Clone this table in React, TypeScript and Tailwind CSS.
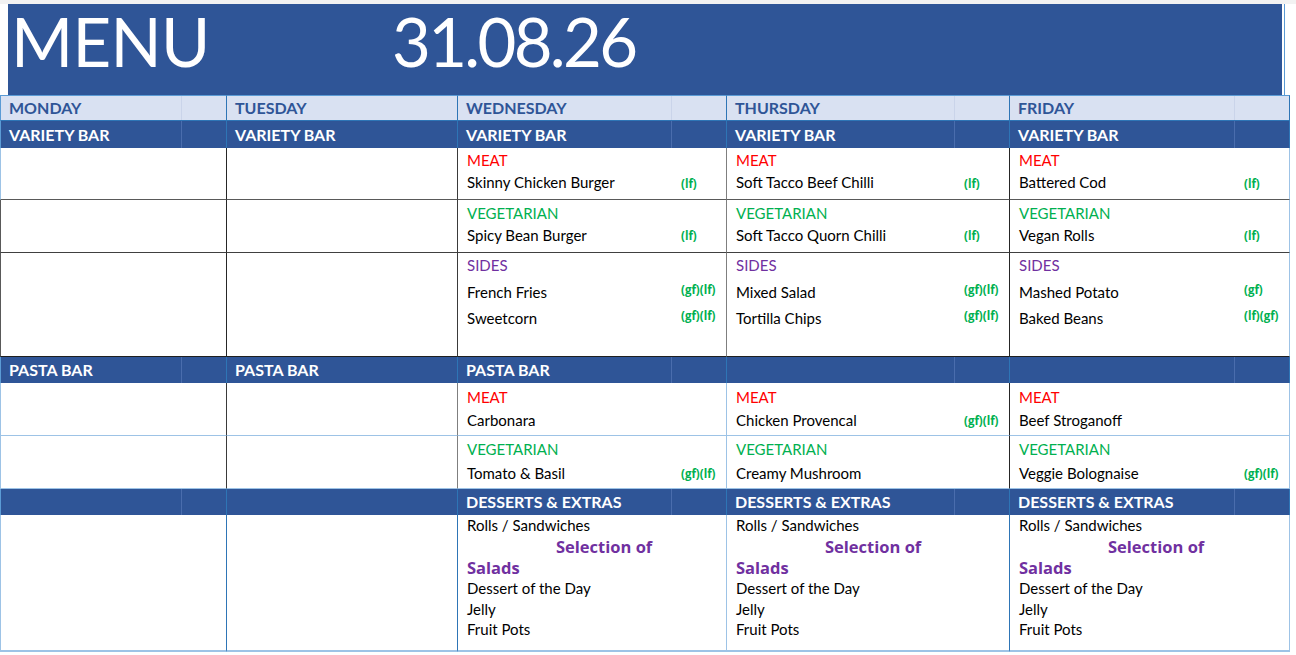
import React from "react";

type Item = { name: string; tag?: string };
type Cell = { label: "MEAT" | "VEGETARIAN" | "SIDES"; items: Item[] } | null;

const cols = [
  { w: "w-[227px]", s: "w-[181px]", day: "MONDAY", split: true },
  { w: "w-[231px]", s: "w-[189px]", day: "TUESDAY", split: false },
  { w: "w-[269px]", s: "w-[214px]", day: "WEDNESDAY", split: true },
  { w: "w-[283px]", s: "w-[228px]", day: "THURSDAY", split: true },
  { w: "w-[280px]", s: "w-[225px]", day: "FRIDAY", split: true },
];

const labelColor: Record<string, string> = {
  MEAT: "text-[#ff0000]",
  VEGETARIAN: "text-[#00b050]",
  SIDES: "text-[#7030a0]",
};

function DayRow() {
  return (
    <div className="flex h-[26px]">
      {cols.map((c, i) => (
        <div
          key={i}
          className={`${c.w} shrink-0 flex bg-[#d9e1f2] border-t border-b border-r border-t-[#5b9bd5] border-b-[#2e75b6] border-r-[#2e75b6] ${i === 0 ? "border-l border-l-[#5b9bd5]" : ""}`}
        >
          <div
            className={`${c.s} shrink-0 flex items-center pl-[8px] border-r ${c.split ? "border-r-[#cad4ea]" : "border-r-transparent"} text-[16px] font-bold text-[#2f5597]`}
          >
            {c.day}
          </div>
        </div>
      ))}
    </div>
  );
}

function Band({ labels, h }: { labels: string[]; h: string }) {
  return (
    <div className={`flex ${h}`}>
      {cols.map((c, i) => (
        <div
          key={i}
          className={`${c.w} shrink-0 flex bg-[#2f5597] border-r border-r-[#2e75b6] ${i === 0 ? "border-l border-l-[#5b9bd5]" : ""}`}
        >
          <div
            className={`${c.s} shrink-0 flex items-center pl-[8px] border-r ${c.split ? "border-r-[#4a6dad]" : "border-r-transparent"} text-[16px] font-bold text-white whitespace-nowrap`}
          >
            {labels[i]}
          </div>
        </div>
      ))}
    </div>
  );
}

function FoodRow({
  h,
  cells,
  vb,
  bb,
  left,
  pt,
  labelLh,
  itemMt,
  itemLh,
  tagMt,
}: {
  h: string;
  cells: Cell[];
  vb: string[];
  bb: string;
  left: string;
  pt: string;
  labelLh: string;
  itemMt: string;
  itemLh: string;
  tagMt: string;
}) {
  return (
    <div className={`flex ${h}`}>
      {cols.map((c, i) => {
        const cell = cells[i];
        return (
          <div
            key={i}
            className={`${c.w} shrink-0 bg-white border-r border-b ${vb[i]} ${bb} ${i === 0 ? `border-l ${left}` : ""} ${pt}`}
          >
            {cell && (
              <>
                <div className={`pl-[9px] ${labelLh} ${labelColor[cell.label]} text-[15px]`}>{cell.label}</div>
                <div className={itemMt}>
                  {cell.items.map((it, k) => (
                    <div key={k} className={`flex items-start ${itemLh}`}>
                      <div className={`${c.s} shrink-0 pl-[9px] text-[15px] text-black whitespace-nowrap`}>{it.name}</div>
                      {it.tag && (
                        <span
                          className={`pl-[9px] font-['Open_Sans',sans-serif] text-[11.5px] leading-[14px] font-bold text-[#00b050] whitespace-nowrap ${tagMt}`}
                        >
                          {it.tag}
                        </span>
                      )}
                    </div>
                  ))}
                </div>
              </>
            )}
          </div>
        );
      })}
    </div>
  );
}

function DessertRow() {
  const vb = [
    "border-r-[#2e75b6]",
    "border-r-[#2e75b6]",
    "border-r-[#9dc3e6]",
    "border-r-[#2e75b6]",
    "border-r-[#9dc3e6]",
  ];
  return (
    <div className="flex h-[137px]">
      {cols.map((c, i) => (
        <div
          key={i}
          className={`${c.w} shrink-0 bg-white border-r border-b-2 border-b-[#9dc3e6] ${vb[i]} ${i === 0 ? "border-l border-l-[#9dc3e6]" : ""}`}
        >
          {i >= 2 && (
            <div className="pl-[9px] text-[15px] text-black whitespace-nowrap">
              <div className="leading-[21px]">Rolls / Sandwiches</div>
              <div className="leading-[21px] pl-[89px] font-['Open_Sans',sans-serif] font-bold text-[16.5px] text-[#7030a0]">
                Selection of
              </div>
              <div className="leading-[21px] font-['Open_Sans',sans-serif] font-bold text-[16.5px] text-[#7030a0]">Salads</div>
              <div className="leading-[21px]">Dessert of the Day</div>
              <div className="leading-[20px]">Jelly</div>
              <div className="leading-[20px]">Fruit Pots</div>
            </div>
          )}
        </div>
      ))}
    </div>
  );
}

export default function App() {
  const varietyV = [
    "border-r-[#262626]",
    "border-r-[#3a3a3a]",
    "border-r-[#7f7f7f]",
    "border-r-[#262626]",
    "border-r-[#9dc3e6]",
  ];
  const pastaV = [
    "border-r-[#3a3a3a]",
    "border-r-[#7f7f7f]",
    "border-r-[#9dc3e6]",
    "border-r-[#262626]",
    "border-r-[#9dc3e6]",
  ];

  return (
    <div className="w-[1296px] h-[655px] bg-white overflow-hidden font-['Lato',sans-serif]">
      <div className="h-[4px] bg-[#f2f2f2]" />
      <div className="flex h-[91px]">
        <div className="w-[8px] shrink-0" />
        <div className="w-[1274px] shrink-0 bg-[#2f5597] flex items-start pt-[4px] pl-[3px] text-white text-[67px] leading-none">
          <span className="w-[381px] shrink-0 tracking-[-0.01em]">MENU</span>
          <span className="tracking-[-0.04em]">31.08.26</span>
        </div>
        <div className="w-[2px] shrink-0" />
        <div className="w-px shrink-0 bg-[#5b9bd5]" />
      </div>

      <DayRow />
      <Band h="h-[27px]" labels={["VARIETY BAR", "VARIETY BAR", "VARIETY BAR", "VARIETY BAR", "VARIETY BAR"]} />
      <FoodRow
        h="h-[52px]"
        vb={varietyV}
        bb="border-b-[#595959]"
        left="border-l-[#9dc3e6]"
        pt="pt-[1px]"
        labelLh="leading-[22px]"
        itemMt=""
        itemLh="leading-[22px]"
        tagMt="mt-[6px]"
        cells={[
          null,
          null,
          { label: "MEAT", items: [{ name: "Skinny Chicken Burger", tag: "(lf)" }] },
          { label: "MEAT", items: [{ name: "Soft Tacco Beef Chilli", tag: "(lf)" }] },
          { label: "MEAT", items: [{ name: "Battered Cod", tag: "(lf)" }] },
        ]}
      />
      <FoodRow
        h="h-[53px]"
        vb={varietyV}
        bb="border-b-[#404040]"
        left="border-l-[#595959]"
        pt="pt-[2px]"
        labelLh="leading-[22px]"
        itemMt=""
        itemLh="leading-[22px]"
        tagMt="mt-[5px]"
        cells={[
          null,
          null,
          { label: "VEGETARIAN", items: [{ name: "Spicy Bean Burger", tag: "(lf)" }] },
          { label: "VEGETARIAN", items: [{ name: "Soft Tacco Quorn Chilli", tag: "(lf)" }] },
          { label: "VEGETARIAN", items: [{ name: "Vegan Rolls", tag: "(lf)" }] },
        ]}
      />
      <FoodRow
        h="h-[104px]"
        vb={varietyV}
        bb="border-b-[#1f1f1f]"
        left="border-l-[#595959]"
        pt="pt-[1px]"
        labelLh="leading-[22px]"
        itemMt="mt-[3px]"
        itemLh="leading-[26px]"
        tagMt="mt-[4px]"
        cells={[
          null,
          null,
          {
            label: "SIDES",
            items: [
              { name: "French Fries", tag: "(gf)(lf)" },
              { name: "Sweetcorn", tag: "(gf)(lf)" },
            ],
          },
          {
            label: "SIDES",
            items: [
              { name: "Mixed Salad", tag: "(gf)(lf)" },
              { name: "Tortilla Chips", tag: "(gf)(lf)" },
            ],
          },
          {
            label: "SIDES",
            items: [
              { name: "Mashed Potato", tag: "(gf)" },
              { name: "Baked Beans", tag: "(lf)(gf)" },
            ],
          },
        ]}
      />
      <Band h="h-[26px]" labels={["PASTA BAR", "PASTA BAR", "PASTA BAR", "", ""]} />
      <FoodRow
        h="h-[53px]"
        vb={pastaV}
        bb="border-b-[#9dc3e6]"
        left="border-l-[#9dc3e6]"
        pt="pt-[2px]"
        labelLh="leading-[24px]"
        itemMt=""
        itemLh="leading-[22px]"
        tagMt="mt-[5px]"
        cells={[
          null,
          null,
          { label: "MEAT", items: [{ name: "Carbonara" }] },
          { label: "MEAT", items: [{ name: "Chicken Provencal", tag: "(gf)(lf)" }] },
          { label: "MEAT", items: [{ name: "Beef Stroganoff" }] },
        ]}
      />
      <FoodRow
        h="h-[53px]"
        vb={pastaV}
        bb="border-b-[#9dc3e6]"
        left="border-l-[#9dc3e6]"
        pt="pt-[1px]"
        labelLh="leading-[25px]"
        itemMt=""
        itemLh="leading-[22px]"
        tagMt="mt-[5px]"
        cells={[
          null,
          null,
          { label: "VEGETARIAN", items: [{ name: "Tomato & Basil", tag: "(gf)(lf)" }] },
          { label: "VEGETARIAN", items: [{ name: "Creamy Mushroom" }] },
          { label: "VEGETARIAN", items: [{ name: "Veggie Bolognaise", tag: "(gf)(lf)" }] },
        ]}
      />
      <Band h="h-[26px]" labels={["", "", "DESSERTS & EXTRAS", "DESSERTS & EXTRAS", "DESSERTS & EXTRAS"]} />
      <DessertRow />
    </div>
  );
}
